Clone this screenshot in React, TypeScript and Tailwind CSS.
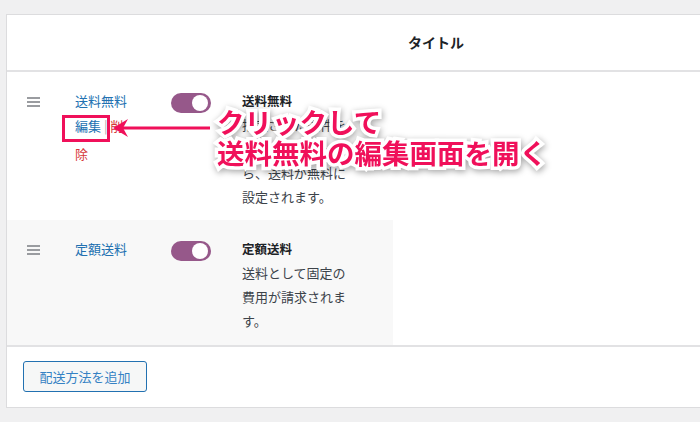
import React from "react";

const font = "font-['Noto_Sans_CJK_JP','Noto_Sans',sans-serif]";

function Toggle() {
  return (
    <div className="relative w-[40px] h-[20px] rounded-full bg-[#96588a]">
      <div className="absolute right-[3px] top-[2px] w-[16px] h-[16px] rounded-full bg-white" />
    </div>
  );
}

function Handle() {
  return (
    <div className="flex flex-col gap-[2px] w-[13px] pt-[25px]">
      <div className="h-[2px] bg-[#9a9ca0]" />
      <div className="h-[2px] bg-[#9a9ca0]" />
      <div className="h-[2px] bg-[#9a9ca0]" />
    </div>
  );
}

export default function App() {
  return (
    <div className={`relative w-[700px] h-[422px] overflow-hidden bg-[#f0f0f1] ${font}`}>
      <div className="pt-[14px] pl-[6px]">
        <div className="w-[720px] bg-white border border-[#dcdcde]">
          {/* header */}
          <div className="h-[57px] flex items-center border-b-2 border-[#e2e2e4]">
            <div className="pl-[401px] text-[14px] font-bold text-[#1d2327]">タイトル</div>
          </div>
          {/* row 1 */}
          <div className="h-[148px] flex">
            <div className="w-[68px] pl-[20px]">
              <Handle />
            </div>
            <div className="w-[96px] pr-[38px] pt-[17px] text-[13px] leading-[24px]">
              <div className="text-[#2271b1]">送料無料</div>
              <div className="mt-[-1px] leading-[28px]">
                <span className="text-[#2271b1]">編集</span>
                <span className="text-[#a7aaad]"> | </span>
                <span className="text-[#d63638]">削除</span>
              </div>
            </div>
            <div className="w-[71px] pt-[21px]">
              <Toggle />
            </div>
            <div className="w-[112px] pt-[17px] text-[13px] leading-[24px] text-[#3c434a]">
              <div className="font-bold text-[12.5px] text-[#1d2327]">送料無料</div>
              <div>指定された条件を満たす注文だったら、送料が無料に設定されます。</div>
            </div>
          </div>
          {/* row 2 */}
          <div className="h-[125px] w-[386px] bg-[#f8f8f8] flex">
            <div className="w-[68px] pl-[20px]">
              <Handle />
            </div>
            <div className="w-[96px] pr-[38px] pt-[17px] text-[13px] leading-[24px] text-[#2271b1]">
              定額送料
            </div>
            <div className="w-[71px] pt-[21px]">
              <Toggle />
            </div>
            <div className="w-[112px] pt-[17px] text-[13px] leading-[24px] text-[#3c434a]">
              <div className="font-bold text-[12.5px] text-[#1d2327]">定額送料</div>
              <div>送料として固定の費用が請求されます。</div>
            </div>
          </div>
          {/* footer */}
          <div className="h-[62px] border-t-2 border-[#e2e2e4] pt-[14px] pl-[16px]">
            <button className="h-[31px] w-[124px] rounded-[3px] border border-[#2271b1] bg-[#f6f7f7] text-[13px] text-[#3582c4]">
              配送方法を追加
            </button>
          </div>
        </div>
      </div>

      {/* annotation: highlight box */}
      <div className="absolute left-[62px] top-[115px] w-[48px] h-[27px] border-[3px] border-[#f0105a]" />
      {/* annotation: arrow */}
      <svg className="absolute left-[110px] top-[118px]" width="102" height="20" viewBox="0 0 102 20">
        <line x1="10" y1="10" x2="100" y2="10" stroke="#f0105a" strokeWidth="3" />
        <polygon points="3,10 18,1 13,10 18,19" fill="#f0105a" />
      </svg>
      {/* annotation: text */}
      <div className="absolute left-[217px] top-[106px] text-[27.5px] font-bold leading-[31px] text-[#f0105a] [-webkit-text-stroke:7px_white] [paint-order:stroke_fill] [filter:drop-shadow(1px_2px_3px_rgba(0,0,0,0.35))]">
        <div>クリックして</div>
        <div>送料無料の編集画面を開く</div>
      </div>
    </div>
  );
}
